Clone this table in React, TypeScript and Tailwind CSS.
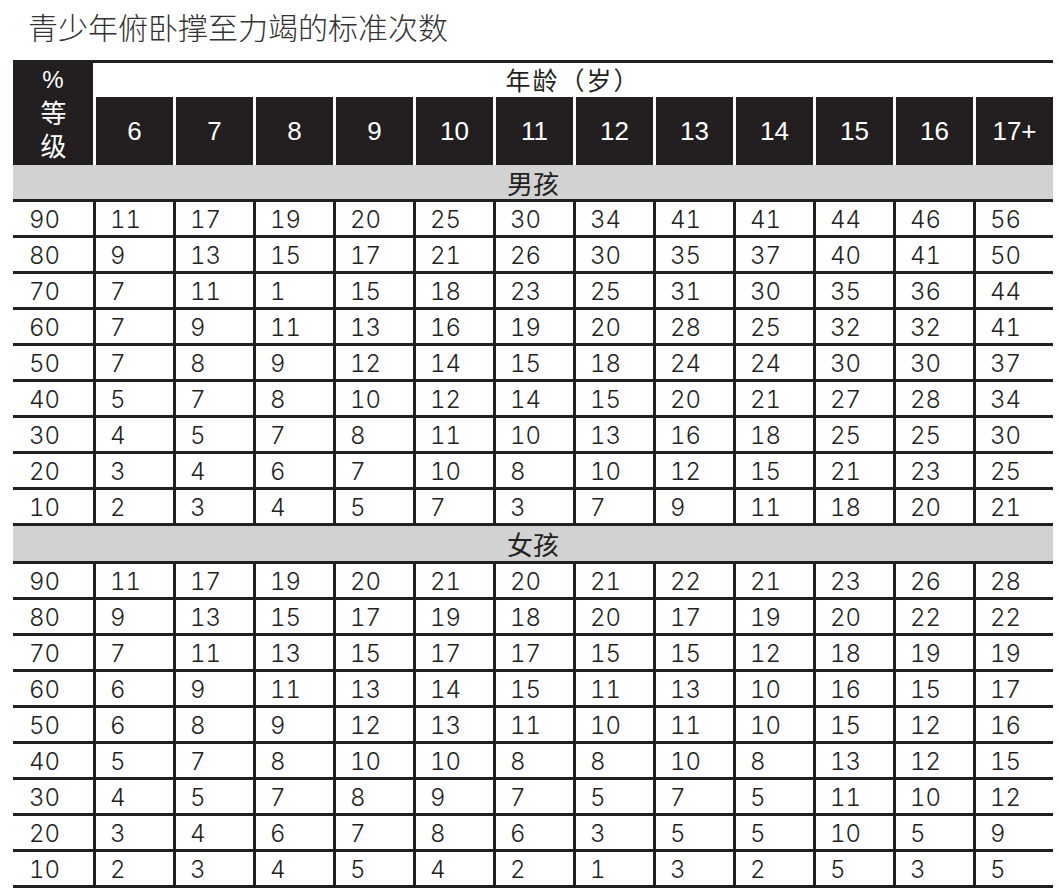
import React from "react";

const ages = ["6", "7", "8", "9", "10", "11", "12", "13", "14", "15", "16", "17+"];

const boys: [string, number[]][] = [
  ["90", [11, 17, 19, 20, 25, 30, 34, 41, 41, 44, 46, 56]],
  ["80", [9, 13, 15, 17, 21, 26, 30, 35, 37, 40, 41, 50]],
  ["70", [7, 11, 1, 15, 18, 23, 25, 31, 30, 35, 36, 44]],
  ["60", [7, 9, 11, 13, 16, 19, 20, 28, 25, 32, 32, 41]],
  ["50", [7, 8, 9, 12, 14, 15, 18, 24, 24, 30, 30, 37]],
  ["40", [5, 7, 8, 10, 12, 14, 15, 20, 21, 27, 28, 34]],
  ["30", [4, 5, 7, 8, 11, 10, 13, 16, 18, 25, 25, 30]],
  ["20", [3, 4, 6, 7, 10, 8, 10, 12, 15, 21, 23, 25]],
  ["10", [2, 3, 4, 5, 7, 3, 7, 9, 11, 18, 20, 21]],
];

const girls: [string, number[]][] = [
  ["90", [11, 17, 19, 20, 21, 20, 21, 22, 21, 23, 26, 28]],
  ["80", [9, 13, 15, 17, 19, 18, 20, 17, 19, 20, 22, 22]],
  ["70", [7, 11, 13, 15, 17, 17, 15, 15, 12, 18, 19, 19]],
  ["60", [6, 9, 11, 13, 14, 15, 11, 13, 10, 16, 15, 17]],
  ["50", [6, 8, 9, 12, 13, 11, 10, 11, 10, 15, 12, 16]],
  ["40", [5, 7, 8, 10, 10, 8, 8, 10, 8, 13, 12, 15]],
  ["30", [4, 5, 7, 8, 9, 7, 5, 7, 5, 11, 10, 12]],
  ["20", [3, 4, 6, 7, 8, 6, 3, 5, 5, 10, 5, 9]],
  ["10", [2, 3, 4, 5, 4, 2, 1, 3, 2, 5, 3, 5]],
];

const cjk = "font-['Noto_Sans_CJK_SC','Liberation_Sans',sans-serif]";

const DataRows = ({ rows }: { rows: [string, number[]][] }) => (
  <>
    {rows.map(([grade, vals]) => (
      <div
        key={grade}
        className="grid grid-cols-[80px_repeat(12,80px)] h-[36px] border-t-[3px] border-[#231f20]"
      >
        <div className="pl-[16px] flex items-center">{grade}</div>
        {vals.map((v, i) => (
          <div
            key={i}
            className="border-l-[3px] border-[#231f20] pl-[14px] flex items-center"
          >
            {v}
          </div>
        ))}
      </div>
    ))}
  </>
);

const Band = ({ label, h }: { label: string; h: string }) => (
  <div
    className={`${h} bg-[#d3d2d2] flex items-center justify-center text-[26px] font-normal ${cjk} text-[#231f20]`}
  >
    {label}
  </div>
);

export default function App() {
  return (
    <div className="w-[1058px] h-[892px] bg-white overflow-hidden">
      <div
        className={`h-[60px] pl-[28px] pt-[8px] leading-[36px] text-[30px] font-light text-[#333] ${cjk}`}
      >
        青少年俯卧撑至力竭的标准次数
      </div>

      <div className="ml-[13px] w-[1040px] font-['Inter','Liberation_Sans',sans-serif] font-light tabular-nums text-[24px] text-[#231f20]">
        {/* header */}
        <div className="flex h-[105px]">
          <div
            className={`w-[80px] bg-[#231f20] text-white flex flex-col items-center pt-[6px] font-normal ${cjk}`}
          >
            <div className="h-[28px] leading-[28px] font-['Liberation_Sans',sans-serif] text-[24px]">
              %
            </div>
            <div className="mt-[6px] h-[66px] w-[26px] text-[26px] leading-[26px] tracking-[7px] whitespace-nowrap [writing-mode:vertical-rl]">
              等级
            </div>
          </div>
          <div className="w-[960px] flex flex-col border-t-[3px] border-[#231f20]">
            <div
              className={`h-[34px] flex items-center justify-center text-[25px] font-normal tracking-[2px] ${cjk}`}
            >
              年龄（岁）
            </div>
            <div className="flex-1 grid grid-cols-[repeat(12,80px)]">
              {ages.map((a) => (
                <div
                  key={a}
                  className="border-l-[3px] border-white bg-[#231f20] text-white text-[26px] font-normal font-['Liberation_Sans',sans-serif] flex items-center justify-center"
                >
                  {a}
                </div>
              ))}
            </div>
          </div>
        </div>

        <Band label="男孩" h="h-[34px]" />
        <DataRows rows={boys} />
        <div className="border-t-[3px] border-[#231f20]" />
        <Band label="女孩" h="h-[35px]" />
        <DataRows rows={girls} />
        <div className="border-t-[3px] border-[#231f20]" />
      </div>
    </div>
  );
}
